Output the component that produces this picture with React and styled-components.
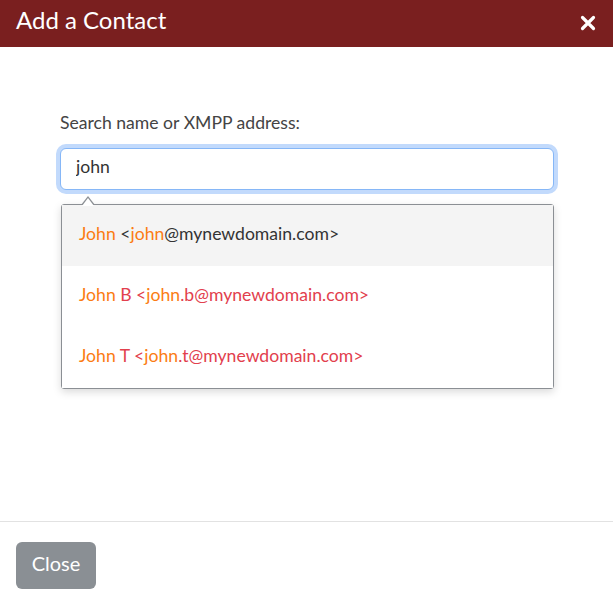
import React from 'react';
import styled, { createGlobalStyle } from 'styled-components';

const Global = createGlobalStyle`
  html, body { margin: 0; padding: 0; background: #fff; }
  body { font-family: Lato, "Open Sans", sans-serif; }
  * { box-sizing: border-box; }
`;

const Modal = styled.div`
  display: flex;
  flex-direction: column;
  height: 602px;
  background: #fff;
`;

const Header = styled.div`
  height: 47px;
  background: #7a1f1f;
  color: #fff;
  display: flex;
  align-items: center;
  justify-content: space-between;
  padding: 0 17px 0 16px;
`;

const Title = styled.h1`
  margin: 0;
  font-size: 24px;
  font-weight: 400;
  line-height: 1;
  margin-top: -7px;
`;

const CloseX = styled.button`
  border: 0;
  background: none;
  padding: 0;
  color: #fff;
  display: flex;
  margin-top: -1px;
  cursor: pointer;
`;

const Body = styled.div`
  flex: 1;
  padding: 63px 59px 0 60px;
`;

const Label = styled.label`
  display: block;
  font-size: 17.6px;
  line-height: 26px;
  color: #444;
  margin-bottom: 12px;
`;

const Field = styled.div`
  position: relative;
`;

const Input = styled.input`
  display: block;
  width: 100%;
  height: 42px;
  border: 1px solid #86b7f7;
  border-radius: 6px;
  box-shadow: 0 0 0 4px #c2dafc;
  outline: none;
  padding: 0 15px 5px;
  font-family: Lato, sans-serif;
  font-size: 17.6px;
  color: #333;
`;

const Suggestions = styled.ul`
  position: absolute;
  top: 56px;
  left: 1px;
  right: 0;
  margin: 0;
  padding: 0;
  list-style: none;
  background: #fff;
  border: 1px solid #8b8f94;
  border-radius: 3px;
  box-shadow: 0 3px 8px rgba(0, 0, 0, 0.15);

  &::before, &::after {
    content: '';
    position: absolute;
    left: 19px;
    border-left: 7px solid transparent;
    border-right: 7px solid transparent;
  }
  &::before {
    top: -9px;
    border-bottom: 9px solid #8b8f94;
  }
  &::after {
    top: -7px;
    left: 20px;
    border-left-width: 6px;
    border-right-width: 6px;
    border-bottom: 8px solid #fff;
  }
`;

const Item = styled.li`
  height: 61px;
  line-height: 58px;
  padding-left: 17px;
  font-size: 17.6px;
  background: ${p => (p.$active ? '#f4f4f4' : '#fff')};
  color: ${p => (p.$active ? '#333' : '#e2404d')};
  white-space: nowrap;
`;

const Mark = styled.span`
  color: #fb7c13;
`;

const Footer = styled.div`
  border-top: 1px solid #e2e2e2;
  height: 81px;
  padding: 20px 16px;
`;

const Button = styled.button`
  width: 80px;
  height: 47px;
  border: 0;
  border-radius: 6px;
  padding: 0 0 5px;
  background: #8a8f94;
  color: #fff;
  font-family: Lato, sans-serif;
  font-size: 20px;
`;

const matches = [
  { suffix: '', addr: '@mynewdomain.com', active: true },
  { suffix: ' B', addr: '.b@mynewdomain.com' },
  { suffix: ' T', addr: '.t@mynewdomain.com' },
];

export default function App() {
  return (
    <Modal>
      <Global />
      <Header>
        <Title>Add a Contact</Title>
        <CloseX aria-label="Close">
          <svg width="16" height="16" viewBox="0 0 16 16">
            <path d="M2.5 2.5 L13.5 13.5 M13.5 2.5 L2.5 13.5" stroke="#fff" strokeWidth="3.2" strokeLinecap="round" />
          </svg>
        </CloseX>
      </Header>
      <Body>
        <Label htmlFor="q">Search name or XMPP address:</Label>
        <Field>
          <Input id="q" defaultValue="john" />
          <Suggestions>
            {matches.map(m => (
              <Item key={m.addr} $active={m.active}>
                <Mark>John</Mark>
                {m.suffix + ' <'}
                <Mark>john</Mark>
                {m.addr + '>'}
              </Item>
            ))}
          </Suggestions>
        </Field>
      </Body>
      <Footer>
        <Button>Close</Button>
      </Footer>
    </Modal>
  );
}
